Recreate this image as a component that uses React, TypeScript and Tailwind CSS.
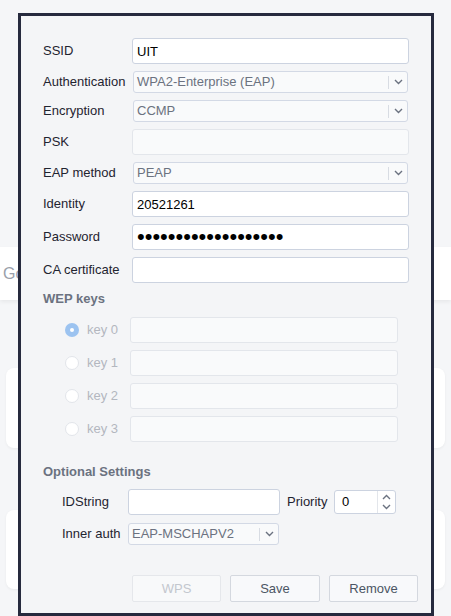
import React from "react";

const Chevron = ({ up = false }: { up?: boolean }) => (
  <svg width="9" height="6" viewBox="0 0 9 6" fill="none" stroke="#6b7280" strokeWidth="1.4">
    {up ? <path d="M1 5l3.5-3.5L8 5" /> : <path d="M1 1l3.5 3.5L8 1" />}
  </svg>
);

const Select = ({ value, className }: { value: string; className: string }) => (
  <div
    className={`flex items-center rounded-[3px] border border-[#d3d9e5] bg-[#f9fafb] text-[13px] text-[#6b7280] ${className}`}
  >
    <span className="flex-1 truncate pl-[3px]">{value}</span>
    <span className="h-[13px] w-px bg-[#d8dce3]" />
    <span className="flex w-[18px] justify-center">
      <Chevron />
    </span>
  </div>
);

const Field = ({ label, children }: { label: string; children: React.ReactNode }) => (
  <div className="flex items-center">
    <span className="w-[89px] text-[13px] text-[#1f2430]">{label}</span>
    {children}
  </div>
);

const TextBox = ({ value = "", type = "text", disabled = false, className = "" }: { value?: string; type?: string; disabled?: boolean; className?: string }) => (
  <input
    readOnly
    type={type}
    value={value}
    className={`h-[26px] rounded-[3px] border px-[4px] text-black outline-none ${
      disabled ? "border-[#e3e6eb] bg-[#f9fafb]" : "border-[#ccd3e0] bg-white"
    } ${className}`}
  />
);

const Radio = ({ checked }: { checked: boolean }) =>
  checked ? (
    <span className="flex h-[14px] w-[14px] items-center justify-center rounded-full bg-[#9cc3f0]">
      <span className="h-[4px] w-[4px] rounded-full bg-white" />
    </span>
  ) : (
    <span className="h-[14px] w-[14px] rounded-full border border-[#e2e5ea] bg-white" />
  );

export default function App() {
  const keys = ["key 0", "key 1", "key 2", "key 3"];
  return (
    <div className="relative h-[616px] w-[451px] overflow-hidden bg-[#f5f6f8] font-[family-name:'Liberation_Sans',Arial,sans-serif]">
      {/* page behind the dialog */}
      <div className="pt-[247px]">
        <div className="flex h-[53px] items-center bg-white pl-[3px] text-[16px] text-[#9aa0ab] shadow-[0_2px_4px_rgba(0,0,0,0.06)]">
          Go
        </div>
        <div className="mx-[6px] mt-[68px] h-[80px] rounded-lg bg-white shadow-[0_1px_3px_rgba(0,0,0,0.05)]" />
        <div className="mx-[6px] mt-[62px] h-[79px] rounded-lg bg-white shadow-[0_1px_3px_rgba(0,0,0,0.05)]" />
      </div>

      {/* dialog */}
      <div className="absolute left-[18px] top-[13px] h-[603px] w-[416px] border-[3px] border-[#262a3e] bg-[#f4f5f7]">
        <div className="flex flex-col gap-[7px] pl-[22px] pt-[22px]">
          <Field label="SSID">
            <TextBox value="UIT" className="w-[277px] text-[13px]" />
          </Field>
          <Field label="Authentication">
            <Select value="WPA2-Enterprise (EAP)" className="ml-px h-[22px] w-[275px]" />
          </Field>
          <Field label="Encryption">
            <Select value="CCMP" className="ml-px h-[22px] w-[275px]" />
          </Field>
          <Field label="PSK">
            <TextBox disabled className="w-[277px] text-[13px]" />
          </Field>
          <Field label="EAP method">
            <Select value="PEAP" className="ml-px h-[22px] w-[275px]" />
          </Field>
          <Field label="Identity">
            <TextBox value="20521261" className="w-[277px] text-[13px]" />
          </Field>
          <Field label="Password">
            <TextBox type="password" value="xxxxxxxxxxxxxxxxxxx" className="w-[277px] text-[22px] leading-none" />
          </Field>
          <Field label="CA certificate">
            <TextBox className="w-[277px] text-[13px]" />
          </Field>
        </div>

        <div className="mt-[8px] pl-[22px] text-[13px] font-bold leading-[16px] text-[#6b7280]">WEP keys</div>

        <div className="mt-[10px] flex flex-col gap-[7px] pl-[44px]">
          {keys.map((k, i) => (
            <div key={k} className="flex items-center">
              <Radio checked={i === 0} />
              <span className="ml-[8px] w-[42.5px] text-[13px] text-[#b3b7bf]">{k}</span>
              <TextBox disabled className="w-[268.5px] text-[13px]" />
            </div>
          ))}
        </div>

        <div className="mt-[22px] pl-[22px] text-[13px] font-bold leading-[16px] text-[#6b7280]">Optional Settings</div>

        <div className="mt-[9px] flex flex-col gap-[8px] pl-[41px]">
          <div className="flex items-center">
            <span className="w-[65.5px] text-[13px] text-[#1f2430]">IDString</span>
            <TextBox className="w-[152.5px] text-[13px]" />
            <span className="ml-[7px] w-[47px] text-[13px] text-[#1f2430]">Priority</span>
            <div className="flex h-[24px] w-[62px] items-center rounded-[3px] border border-[#ccd3e0] bg-white text-[13px] text-black">
              <span className="flex-1 pl-[7px]">0</span>
              <span className="flex h-full w-[18px] flex-col items-center justify-center gap-[4px] border-l border-[#e3e6eb]">
                <Chevron up />
                <Chevron />
              </span>
            </div>
          </div>
          <div className="flex items-center">
            <span className="w-[66px] text-[13px] text-[#1f2430]">Inner auth</span>
            <Select value="EAP-MSCHAPV2" className="h-[22px] w-[151px]" />
          </div>
        </div>

        <div className="mt-[30px] flex justify-end gap-[9px] pr-[13px]">
          <button className="h-[27px] w-[89px] rounded-[2px] border border-[#e5e7eb] bg-[#f8f9fa] text-[13px] text-[#c3c7ce]">
            WPS
          </button>
          <button className="h-[27px] w-[90px] rounded-[2px] border border-[#d4d8df] bg-[#f8f9fb] text-[13px] text-[#4b5563]">
            Save
          </button>
          <button className="h-[27px] w-[89px] rounded-[2px] border border-[#d4d8df] bg-[#f8f9fb] text-[13px] text-[#4b5563]">
            Remove
          </button>
        </div>
      </div>
    </div>
  );
}
